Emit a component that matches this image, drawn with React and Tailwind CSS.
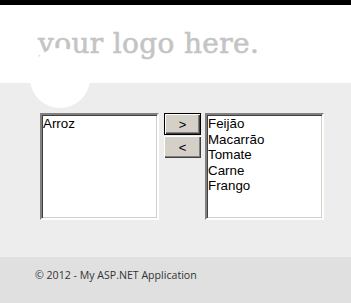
export default function App() {
  const right = ["Feijão", "Macarrão", "Tomate", "Carne", "Frango"];
  const listBox =
    "w-[119px] h-[107px] bg-white border-2 border-t-[#808080] border-l-[#808080] border-b-[#ffffff] border-r-[#ffffff] shadow-[inset_1px_1px_0_#404040,inset_-1px_-1px_0_#d4d0c8] pl-px pt-px text-[13.33px] leading-[15.5px] text-black";
  return (
    <div className="w-[351px] h-[303px] overflow-hidden flex flex-col bg-[#ededed]" style={{ fontFamily: '"Liberation Sans", Arial, sans-serif' }}>
      <div className="h-[5px] bg-black shrink-0" />
      <div className="h-[78px] bg-white shrink-0 pl-[38px] pt-[23px]">
        <div
          className="text-[28px] leading-[32px] font-normal text-[#c4c4c4] tracking-[0.35px] [-webkit-text-stroke:0.6px_#c4c4c4]"
          style={{ fontFamily: '"DejaVu Serif", "Liberation Serif", serif' }}
        >
          your logo here.
        </div>
      </div>
      <div className="relative h-[174px] shrink-0 pt-[30px] pl-[40px]">
        <div className="absolute left-[30px] -top-[35px] w-[60px] h-[60px] rounded-full bg-white" />
        <div className="relative flex items-start">
          <div className={listBox}>Arroz</div>
          <div className="ml-[5px] flex flex-col gap-px">
            <button className="w-[37px] h-[22px] bg-[#d4d0c8] border border-black shadow-[inset_1px_1px_0_#ffffff,inset_-1px_-1px_0_#404040,inset_-2px_-2px_0_#808080] text-[13px] text-black leading-none flex items-center justify-center">
              &gt;
            </button>
            <button className="w-[37px] h-[22px] bg-[#d4d0c8] shadow-[inset_1px_1px_0_#ffffff,inset_-1px_-1px_0_#404040,inset_-2px_-2px_0_#808080] text-[13px] text-black leading-none flex items-center justify-center">
              &lt;
            </button>
          </div>
          <div className={"ml-[4px] " + listBox}>
            {right.map((r) => (
              <div key={r}>{r}</div>
            ))}
          </div>
        </div>
      </div>
      <div className="flex-1 bg-[#e0e0e0] pl-[35px] pt-[11px]">
        <div
          className="text-[10.6px] leading-[15px] text-[#333]"
          style={{ fontFamily: '"Open Sans", "Noto Sans", sans-serif' }}
        >
          © 2012 - My ASP.NET Application
        </div>
      </div>
    </div>
  );
}
